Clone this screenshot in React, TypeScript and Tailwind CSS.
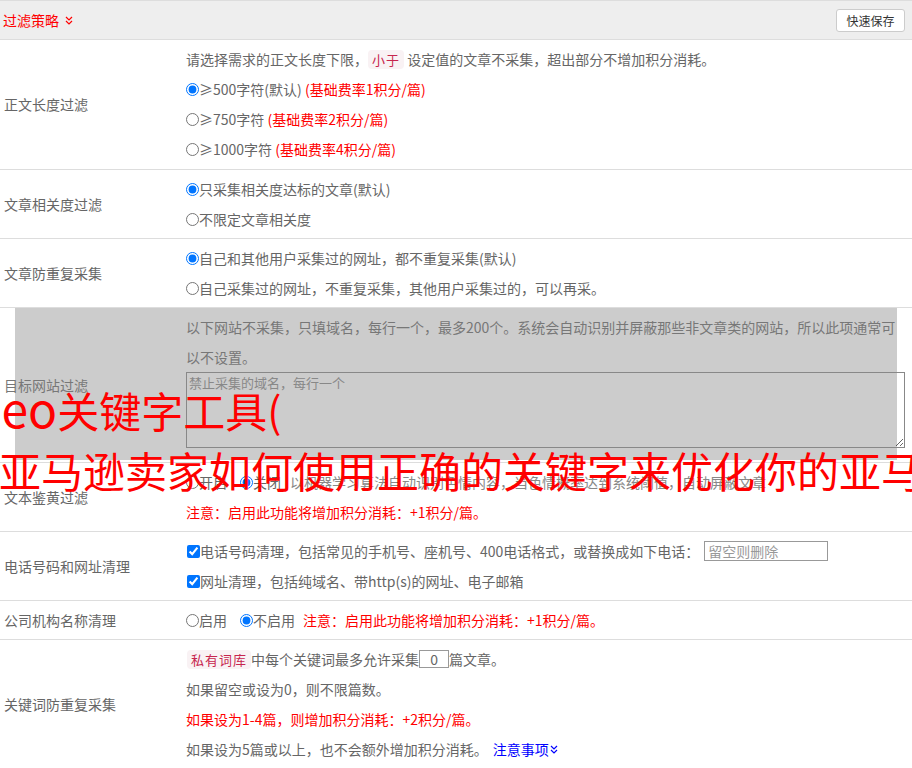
import React from "react";

const FONT = { fontFamily: '"Noto Sans CJK SC", "Microsoft YaHei", sans-serif' };

function DoubleChevron({ color }: { color: string }) {
  return (
    <svg width="8" height="9" viewBox="0 0 8 9" className="inline-block" fill="none" stroke={color} strokeWidth="1.2">
      <path d="M1 1 L4 4 L7 1" />
      <path d="M1 5 L4 8 L7 5" />
    </svg>
  );
}

function Radio({ checked, label, name, className = "" }: { checked?: boolean; label: React.ReactNode; name: string; className?: string }) {
  return (
    <label className={"flex items-center whitespace-nowrap " + className}>
      <input type="radio" name={name} defaultChecked={checked} className="m-0 w-[13px] h-[13px] shrink-0" />
      <span>{label}</span>
    </label>
  );
}

function Check({ label }: { label: React.ReactNode }) {
  return (
    <label className="flex items-center whitespace-nowrap">
      <input type="checkbox" defaultChecked className="m-0 ml-[1px] w-[13px] h-[13px] shrink-0" />
      <span>{label}</span>
    </label>
  );
}

function Tag({ children }: { children: React.ReactNode }) {
  return (
    <span className="inline-block bg-[#f9f2f4] text-[#c7254e] text-[13px] leading-[19px] px-[4px] rounded-[4px] tracking-[1px]">
      {children}
    </span>
  );
}

function Line({ children, className = "" }: { children: React.ReactNode; className?: string }) {
  return <div className={"h-[30px] flex items-center whitespace-nowrap " + className}>{children}</div>;
}

function Row({
  label,
  children,
  className = "",
  overlay,
}: {
  label: string;
  children: React.ReactNode;
  className?: string;
  overlay?: React.ReactNode;
}) {
  return (
    <div className={"flex border-b border-[#dddddd] relative " + className}>
      {overlay}
      <div className="w-[186px] shrink-0 pl-[4px] flex items-center relative z-10">{label}</div>
      <div className="flex-1 pr-[7px] relative z-10">{children}</div>
    </div>
  );
}

export default function App() {
  return (
    <div className="w-[912px] h-[768px] overflow-hidden relative bg-white text-[14px] text-[#666666]" style={FONT}>
      {/* header */}
      <div className="h-[40px] border-t border-b border-[#dddddd] bg-[#eeeeee] flex items-center justify-between pl-[3px] pr-[7px]">
        <div className="flex items-center gap-[6px] text-[#ff0000]">
          <span>过滤策略</span>
          <DoubleChevron color="#ff0000" />
        </div>
        <button className="h-[23px] w-[69px] bg-white border border-[#cccccc] rounded-[3px] text-[12px] text-[#333333] leading-[21px]">
          快速保存
        </button>
      </div>

      {/* 正文长度过滤 */}
      <Row label="正文长度过滤">
        <div className="pt-[4px] pb-[5px]">
          <Line>
            <span>请选择需求的正文长度下限，</span>
            <Tag>小于</Tag>
            <span>&nbsp;设定值的文章不采集，超出部分不增加积分消耗。</span>
          </Line>
          <Line>
            <Radio name="len" checked label={<>≥500字符(默认) <span className="text-[#ff0000]">(基础费率1积分/篇)</span></>} />
          </Line>
          <Line>
            <Radio name="len" label={<>≥750字符 <span className="text-[#ff0000]">(基础费率2积分/篇)</span></>} />
          </Line>
          <Line>
            <Radio name="len" label={<>≥1000字符 <span className="text-[#ff0000]">(基础费率4积分/篇)</span></>} />
          </Line>
        </div>
      </Row>

      {/* 文章相关度过滤 */}
      <Row label="文章相关度过滤">
        <div className="py-[4px]">
          <Line><Radio name="rel" checked label="只采集相关度达标的文章(默认)" /></Line>
          <Line><Radio name="rel" label="不限定文章相关度" /></Line>
        </div>
      </Row>

      {/* 文章防重复采集 */}
      <Row label="文章防重复采集">
        <div className="py-[4px]">
          <Line><Radio name="dup" checked label="自己和其他用户采集过的网址，都不重复采集(默认)" /></Line>
          <Line><Radio name="dup" label="自己采集过的网址，不重复采集，其他用户采集过的，可以再采。" /></Line>
        </div>
      </Row>

      {/* 目标网站过滤 */}
      <Row
        label="目标网站过滤"
        className="text-[#777777]"
        overlay={<div className="absolute left-[15px] right-[15px] top-0 h-[152px] bg-[#cccccc] z-0" />}
      >
        <div className="pt-[4px] pb-[14px]">
          <Line>以下网站不采集，只填域名，每行一个，最多200个。系统会自动识别并屏蔽那些非文章类的网站，所以此项通常可</Line>
          <Line>以不设置。</Line>
          <textarea
            placeholder="禁止采集的域名，每行一个"
            className="block w-full h-[76px] border border-[#888888] bg-transparent text-[13px] leading-[18px] px-[2px] py-[1px] placeholder:text-[#888888]"
          />
        </div>
      </Row>

      {/* 文本鉴黄过滤 */}
      <Row label="文本鉴黄过滤">
        <div className="py-[4px]">
          <Line>
            <Radio name="porn" label="开启" className="mr-[13px]" />
            <Radio name="porn" checked label="关闭" className="mr-[9px]" />
            <span className="text-[#888888]">以机器学习算法自动识别色情内容，当色情概率达到系统阈值，自动屏蔽文章</span>
          </Line>
          <Line className="text-[#ff0000]">注意：启用此功能将增加积分消耗：+1积分/篇。</Line>
        </div>
      </Row>

      {/* 电话号码和网址清理 */}
      <Row label="电话号码和网址清理">
        <div className="py-[4px]">
          <Line>
            <Check label="电话号码清理，包括常见的手机号、座机号、400电话格式，或替换成如下电话：" />
            <input
              placeholder="留空则删除"
              className="ml-[5px] w-[124px] h-[20px] border border-[#999999] px-[3px] text-[14px] leading-[18px] placeholder:text-[#999999]"
            />
          </Line>
          <Line>
            <Check label="网址清理，包括纯域名、带http(s)的网址、电子邮箱" />
          </Line>
        </div>
      </Row>

      {/* 公司机构名称清理 */}
      <Row label="公司机构名称清理">
        <div className="py-[4px]">
          <Line>
            <Radio name="org" label="启用" className="mr-[13px]" />
            <Radio name="org" checked label="不启用" className="mr-[8px]" />
            <span className="text-[#ff0000]">注意：启用此功能将增加积分消耗：+1积分/篇。</span>
          </Line>
        </div>
      </Row>

      {/* 关键词防重复采集 */}
      <Row label="关键词防重复采集" className="border-b-0">
        <div className="py-[4px]">
          <Line>
            <span className="ml-[1px]"><Tag>私有词库</Tag></span>
            <span>中每个关键词最多允许采集</span>
            <input defaultValue="0" className="w-[30px] h-[18px] border border-[#999999] text-center text-[14px] leading-[16px] text-[#666666]" />
            <span>篇文章。</span>
          </Line>
          <Line>如果留空或设为0，则不限篇数。</Line>
          <Line className="text-[#ff0000]">如果设为1-4篇，则增加积分消耗：+2积分/篇。</Line>
          <Line>
            <span>如果设为5篇或以上，也不会额外增加积分消耗。</span>
            <span className="ml-[5px] text-[#0000ff] flex items-center gap-[1px]">
              注意事项
              <DoubleChevron color="#0000ff" />
            </span>
          </Line>
        </div>
      </Row>

      {/* big red overlay title */}
      <div className="absolute left-0 top-[380px] z-20 text-[#ff0000] text-[42px] leading-[60px] whitespace-nowrap pointer-events-none">
        <div className="ml-[-21px]">
          <span className="text-[48px] leading-none">seo</span>关键字工具(
        </div>
        <div className="ml-[-1px]">亚马逊卖家如何使用正确的关键字来优化你的亚马逊listing)</div>
      </div>
    </div>
  );
}
